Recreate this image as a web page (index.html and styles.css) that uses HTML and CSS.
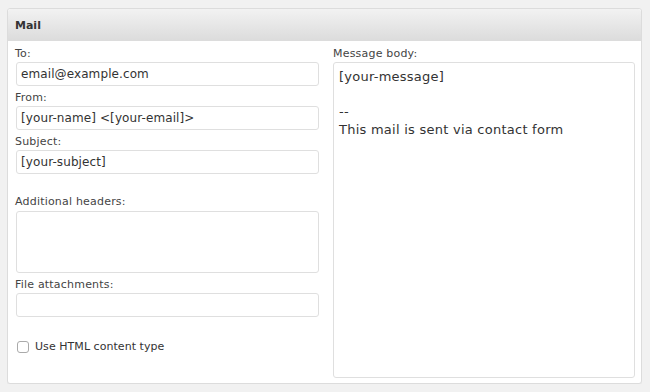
FILE: index.html
```html
<!DOCTYPE html>
<html lang="en">
<head>
    <meta charset="UTF-8">
    <meta name="viewport" content="width=device-width, initial-scale=1.0">
    <title>Mail</title>
    <link rel="stylesheet" href="styles.css">
</head>
<body>
    <div class="postbox">
        <h3 class="postbox-title">Mail</h3>

        <div class="postbox-inside">
            <div class="col col-left">
                <label for="mail-to">To:</label>
                <input type="text" id="mail-to" value="email@example.com">

                <label for="mail-from">From:</label>
                <input type="text" id="mail-from" value="[your-name] <[your-email]>">

                <label for="mail-subject">Subject:</label>
                <input type="text" id="mail-subject" value="[your-subject]">

                <label for="mail-headers" class="spaced">Additional headers:</label>
                <textarea id="mail-headers" class="small-area"></textarea>

                <label for="mail-attachments">File attachments:</label>
                <input type="text" id="mail-attachments" value="">

                <div class="check-row">
                    <input type="checkbox" id="mail-html">
                    <label for="mail-html">Use HTML content type</label>
                </div>
            </div>

            <div class="col col-right">
                <label for="mail-body">Message body:</label>
                <textarea id="mail-body" class="body-area">[your-message]

--
This mail is sent via contact form</textarea>
            </div>
        </div>
    </div>
</body>
</html>
```

FILE: styles.css
```css
* {
    box-sizing: border-box;
    margin: 0;
    padding: 0;
}

body {
    font-family: 'DejaVu Sans', Verdana, sans-serif;
    background-color: #f1f1f1;
    margin: 8px 8px 8px 7px;
    color: #333;
}

.postbox {
    background-color: #fff;
    border: 1px solid #dcdcdc;
    border-radius: 3px;
    box-shadow: 0 1px 1px rgba(0, 0, 0, 0.04);
}

.postbox-title {
    height: 32px;
    line-height: 33px;
    padding: 0 7px;
    font-size: 11px;
    font-weight: 700;
    color: #333;
    background: linear-gradient(to bottom, #f2f2f2, #dcdcdc);
    border-bottom: 1px solid #dcdcdc;
    border-radius: 3px 3px 0 0;
}

.postbox-inside {
    display: grid;
    grid-template-columns: 304px 1fr;
    column-gap: 14px;
    padding: 4px 7px 5px 7px;
}

.col label {
    display: block;
    font-size: 11px;
    line-height: 16px;
    padding-top: 1px;
    letter-spacing: 0.2px;
    color: #444;
    margin-top: 3px;
}

.col label:first-child {
    margin-top: 0;
}

.col label.spaced {
    margin-top: 19px;
}

input[type="text"], textarea {
    display: block;
    font-family: 'DejaVu Sans', Verdana, sans-serif;
    color: #333;
    background-color: #fff;
    border: 1px solid #dfdfdf;
    border-radius: 3px;
    outline: none;
}

input[type="text"] {
    width: 303px;
    height: 24px;
    margin-left: 1px;
    padding: 0 4px;
    font-size: 12px;
    letter-spacing: 0.1px;
}

.small-area {
    width: 303px;
    height: 62px;
    margin: 1px 0 0 1px;
    resize: none;
}

.body-area {
    width: 302px;
    height: 316px;
    padding: 5px 5px;
    font-size: 13px;
    line-height: 17.5px;
    letter-spacing: 0.25px;
    resize: none;
}

.check-row {
    display: flex;
    align-items: center;
    gap: 6px;
    margin: 22px 0 0 2px;
}

.check-row input[type="checkbox"] {
    appearance: none;
    -webkit-appearance: none;
    width: 12px;
    height: 12px;
    border: 1px solid #aaa;
    border-radius: 3px;
    background-color: #fff;
}

.check-row label {
    margin-top: 0;
    padding-top: 0;
    letter-spacing: 0.05px;
    color: #333;
}
```
